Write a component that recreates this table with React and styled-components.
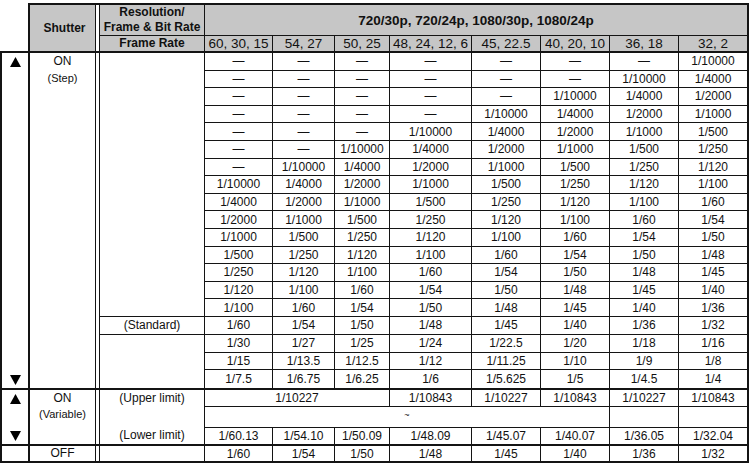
import React from 'react';
import styled, { createGlobalStyle } from 'styled-components';

const GlobalStyle = createGlobalStyle`
  html, body {
    margin: 0;
    padding: 0;
    background: #ffffff;
  }
  body {
    font-family: "Liberation Sans", Arial, Helvetica, sans-serif;
    color: #111111;
  }
`;

const LINE = '#141414';
const HEAD_BG = '#c6c6c6';

const Page = styled.div`
  padding-top: 3px;
`;

const Table = styled.table`
  width: 749px;
  table-layout: fixed;
  border-collapse: separate;
  border-spacing: 0;
  font-size: 12px;
`;

const Col = styled.col`
  width: ${p => p.$w}px;
`;

const Row = styled.tr`
  height: ${p => p.$h}px;
`;

const HeadCell = styled.th`
  padding: 0;
  background: ${HEAD_BG};
  text-align: center;
  vertical-align: middle;
  font-size: ${p => p.$size || 12}px;
  font-weight: ${p => (p.$regular ? 400 : 700)};
  line-height: 15px;
  white-space: nowrap;
  border-top: ${p => (p.$top ? '2px' : '0')} solid ${LINE};
  border-right: ${p => p.$right || 1}px solid ${LINE};
  border-bottom: ${p => p.$bottom || 1}px solid ${LINE};
`;

const BlankCorner = styled.th`
  padding: 0;
  background: #ffffff;
  border-right: 2px solid ${LINE};
  border-bottom: 2px solid ${LINE};
`;

const DoubleHead = styled(HeadCell)`
  box-shadow: inset -3px 0 0 #ffffff, inset -4px 0 0 ${LINE};
`;

const Cell = styled.td`
  padding: 0;
  text-align: center;
  vertical-align: ${p => p.$valign || 'middle'};
  line-height: 14px;
  white-space: nowrap;
  border-right: ${p => p.$right || 1}px solid ${LINE};
  border-bottom: ${p => p.$bottom || 1}px solid ${LINE};
`;

const ArrowCell = styled(Cell)`
  border-left: 2px solid ${LINE};
  border-right: 2px solid ${LINE};
  vertical-align: top;
`;

const ShutterCell = styled(Cell)`
  vertical-align: top;
  box-shadow: inset -3px 0 0 #ffffff, inset -4px 0 0 ${LINE};
  padding-right: 4px;
`;

const ArrowStack = styled.div`
  height: ${p => p.$h}px;
  display: flex;
  flex-direction: column;
  justify-content: space-between;
  align-items: center;
`;

const ArrowBox = styled.div`
  height: 17px;
  display: flex;
  align-items: center;
  justify-content: center;
`;

const ModeName = styled.div`
  font-size: 12px;
  line-height: 17px;
`;

const ModeNote = styled.div`
  font-size: 11px;
  line-height: ${p => p.$lh || 16}px;
`;

const LimitStack = styled.div`
  height: ${p => p.$h}px;
  display: flex;
  flex-direction: column;
  justify-content: space-between;
`;

const LimitLabel = styled.div`
  line-height: 17px;
`;

const Tilde = styled.span`
  font-size: 9px;
  position: relative;
  top: -3px;
`;

const Triangle = ({ down }) => (
  <svg width="11" height="10" viewBox="0 0 11 10">
    <polygon points={down ? '0,0 11,0 5.5,10' : '5.5,0 11,10 0,10'} fill="#000" />
  </svg>
);

const Arrows = ({ h }) => (
  <ArrowStack $h={h}>
    <ArrowBox>
      <Triangle />
    </ArrowBox>
    <ArrowBox>
      <Triangle down />
    </ArrowBox>
  </ArrowStack>
);

const widths = [30, 70, 105, 68, 62, 55, 82, 69, 69, 69, 70];
const rates = ['60, 30, 15', '54, 27', '50, 25', '48, 24, 12, 6', '45, 22.5', '40, 20, 10', '36, 18', '32, 2'];

const speeds = [10000, 4000, 2000, 1000, 500, 250, 120, 100, 60, 54, 50, 48, 45, 40, 36, 32];

// the fast rows shift one step per frame-rate column
const stepRows = Array.from({ length: 16 }, (_, r) =>
  rates.map((_, c) => {
    const i = r + c - 7;
    return i < 0 ? '—' : `1/${speeds[i]}`;
  })
);

const slowRows = [
  ['1/30', '1/27', '1/25', '1/24', '1/22.5', '1/20', '1/18', '1/16'],
  ['1/15', '1/13.5', '1/12.5', '1/12', '1/11.25', '1/10', '1/9', '1/8'],
  ['1/7.5', '1/6.75', '1/6.25', '1/6', '1/5.625', '1/5', '1/4.5', '1/4'],
];

const upperLimits = ['1/10843', '1/10227', '1/10843', '1/10227', '1/10843'];
const lowerLimits = ['1/60.13', '1/54.10', '1/50.09', '1/48.09', '1/45.07', '1/40.07', '1/36.05', '1/32.04'];
const offValues = ['1/60', '1/54', '1/50', '1/48', '1/45', '1/40', '1/36', '1/32'];

const ROW_H = 17.6;

const ValueCells = ({ values, bottom }) =>
  values.map((v, i) => (
    <Cell key={i} $right={i === values.length - 1 ? 2 : 1} $bottom={bottom}>
      {v}
    </Cell>
  ));

export default function App() {
  const allStep = [...stepRows, ...slowRows];

  return (
    <Page>
      <GlobalStyle />
      <Table>
        <colgroup>
          {widths.map((w, i) => (
            <Col key={i} $w={w} />
          ))}
        </colgroup>
        <thead>
          <Row $h={33}>
            <BlankCorner rowSpan={2} />
            <DoubleHead rowSpan={2} $top $bottom={2}>
              Shutter
            </DoubleHead>
            <HeadCell $top>
              Resolution/
              <br />
              Frame &amp; Bit Rate
            </HeadCell>
            <HeadCell $top colSpan={8} $right={2} $size={13.5}>
              720/30p, 720/24p, 1080/30p, 1080/24p
            </HeadCell>
          </Row>
          <Row $h={17}>
            <HeadCell $bottom={2}>Frame Rate</HeadCell>
            {rates.map((r, i) => (
              <HeadCell key={r} $regular $size={13.5} $bottom={2} $right={i === rates.length - 1 ? 2 : 1}>
                {r}
              </HeadCell>
            ))}
          </Row>
        </thead>
        <tbody>
          {allStep.map((vals, r) => {
            const last = r === allStep.length - 1;
            return (
              <Row key={`s${r}`} $h={last ? ROW_H + 2 : ROW_H}>
                {r === 0 && (
                  <>
                    <ArrowCell rowSpan={19} $bottom={2}>
                      <Arrows h={335} />
                    </ArrowCell>
                    <ShutterCell rowSpan={19} $bottom={2}>
                      <ModeName>ON</ModeName>
                      <ModeNote>(Step)</ModeNote>
                    </ShutterCell>
                    <Cell rowSpan={15} />
                  </>
                )}
                {r === 15 && <Cell>(Standard)</Cell>}
                {r === 16 && <Cell rowSpan={3} $bottom={2} />}
                <ValueCells values={vals} bottom={last ? 2 : 1} />
              </Row>
            );
          })}

          <Row $h={17}>
            <ArrowCell rowSpan={3} $bottom={2}>
              <Arrows h={54} />
            </ArrowCell>
            <ShutterCell rowSpan={3} $bottom={2}>
              <ModeName>ON</ModeName>
              <ModeNote $lh={14}>(Variable)</ModeNote>
            </ShutterCell>
            <Cell rowSpan={3} $bottom={2} $valign="top">
              <LimitStack $h={54}>
                <LimitLabel>(Upper limit)</LimitLabel>
                <LimitLabel>(Lower limit)</LimitLabel>
              </LimitStack>
            </Cell>
            <Cell colSpan={3}>1/10227</Cell>
            <ValueCells values={upperLimits} />
          </Row>
          <Row $h={21}>
            <Cell colSpan={6}>
              <Tilde>~</Tilde>
            </Cell>
            <Cell />
            <Cell $right={2} />
          </Row>
          <Row $h={18}>
            <ValueCells values={lowerLimits} bottom={2} />
          </Row>

          <Row $h={17}>
            <ArrowCell $bottom={2} />
            <ShutterCell $bottom={2}>OFF</ShutterCell>
            <Cell $bottom={2} />
            <ValueCells values={offValues} bottom={2} />
          </Row>
        </tbody>
      </Table>
    </Page>
  );
}
